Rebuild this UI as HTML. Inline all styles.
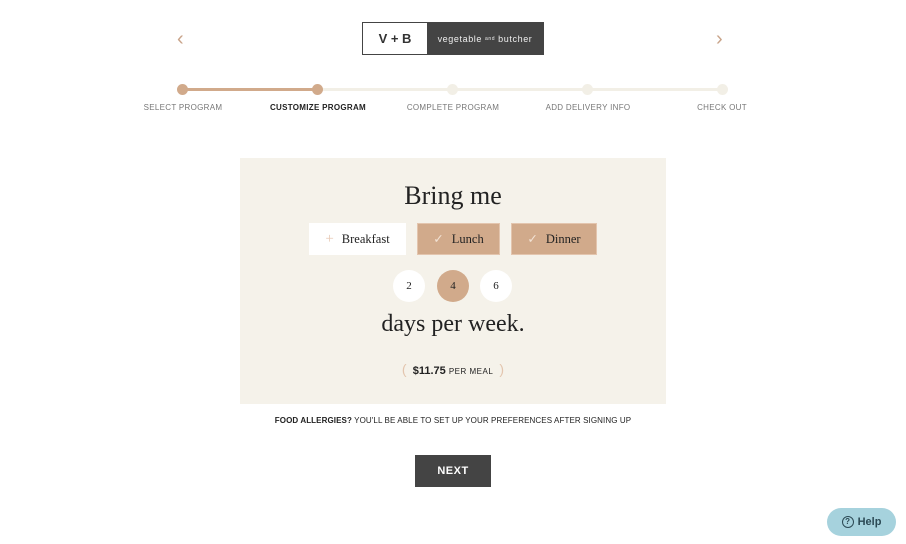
<!DOCTYPE html>
<html><head><style>
*{margin:0;padding:0;box-sizing:border-box}
body{width:906px;height:544px;background:#fff;position:relative;font-family:"Liberation Sans",sans-serif;overflow:hidden}
.a{position:absolute}
.serif{font-family:"Liberation Serif",serif;color:#222}
.step{font-size:8px;letter-spacing:.3px;color:#777;top:103px;text-align:center;width:140px}
.dot{width:11px;height:11px;border-radius:50%;top:84px;background:#f2efe6}
.btn{top:223px;height:32px;font-size:12.5px;display:flex;align-items:center;justify-content:center}
.c{width:32px;height:32px;border-radius:50%;top:270px;background:#fff;font-size:11px;display:flex;align-items:center;justify-content:center}
</style></head><body>
<div class="a" style="left:177px;top:28px;color:#c9a48a;font-size:20px;font-weight:300">&#8249;</div>
<div class="a" style="left:716px;top:28px;color:#c9a48a;font-size:20px;font-weight:300">&#8250;</div>
<div class="a" style="left:362px;top:22px;width:182px;height:33px;border:1px solid #444;display:flex">
<div style="width:64px;background:#fff;display:flex;align-items:center;justify-content:center;font-size:13px;font-weight:bold;color:#333">V + B</div>
<div style="flex:1;background:#444;color:#eee;font-size:9px;letter-spacing:.6px;display:flex;align-items:center;justify-content:center">vegetable <span style="font-size:5px;margin:0 3px">and</span> butcher</div>
</div>
<div class="a" style="left:183px;top:88px;width:540px;height:3px;background:#f2efe6"></div>
<div class="a" style="left:183px;top:88px;width:135px;height:3px;background:#d1aa8b"></div>
<div class="a dot" style="left:177px;background:#d1aa8b"></div>
<div class="a dot" style="left:312px;background:#d1aa8b"></div>
<div class="a dot" style="left:447px"></div>
<div class="a dot" style="left:582px"></div>
<div class="a dot" style="left:717px"></div>
<div class="a step" style="left:113px">SELECT PROGRAM</div>
<div class="a step" style="left:248px;color:#222;font-weight:bold">CUSTOMIZE PROGRAM</div>
<div class="a step" style="left:383px">COMPLETE PROGRAM</div>
<div class="a step" style="left:518px">ADD DELIVERY INFO</div>
<div class="a step" style="left:652px">CHECK OUT</div>
<div class="a" style="left:240px;top:158px;width:426px;height:246px;background:#f5f2ea"></div>
<div class="a serif" style="left:240px;top:181px;width:426px;text-align:center;font-size:26px">Bring me</div>
<div class="a btn serif" style="left:309px;width:97px;background:#fff"><span style="color:#e8c9b5;margin-right:8px;font-size:15px">+</span>Breakfast</div>
<div class="a btn serif" style="left:417px;width:83px;background:#d1aa8b;border:1px solid #e3c5ae"><span style="color:#f2e2d4;margin-right:8px">✓</span>Lunch</div>
<div class="a btn serif" style="left:511px;width:86px;background:#d1aa8b;border:1px solid #e3c5ae"><span style="color:#f2e2d4;margin-right:8px">✓</span>Dinner</div>
<div class="a c serif" style="left:393px">2</div>
<div class="a c serif" style="left:437px;background:#d1aa8b">4</div>
<div class="a c serif" style="left:480px">6</div>
<div class="a serif" style="left:240px;top:311px;width:426px;text-align:center;font-size:24px">days per week.</div>
<div class="a" style="left:240px;top:361px;width:426px;text-align:center;font-size:11px;color:#222"><span style="color:#e3c5ae;font-size:14px">(</span>&nbsp; <b>$11.75</b> <span style="font-size:8px;letter-spacing:.5px">PER MEAL</span> &nbsp;<span style="color:#e3c5ae;font-size:14px">)</span></div>
<div class="a" style="left:0;top:416px;width:906px;text-align:center;font-size:8px;letter-spacing:.1px;color:#222"><b>FOOD ALLERGIES?</b> YOU'LL BE ABLE TO SET UP YOUR PREFERENCES AFTER SIGNING UP</div>
<div class="a" style="left:415px;top:455px;width:76px;height:32px;background:#444;color:#fff;font-size:11px;letter-spacing:.5px;display:flex;align-items:center;justify-content:center;font-weight:bold">NEXT</div>
<div class="a" style="left:827px;top:508px;width:69px;height:28px;border-radius:14px;background:#a6d2dd;color:#2c4a55;font-size:11px;font-weight:bold;display:flex;align-items:center;justify-content:center"><span style="display:inline-block;width:12px;height:12px;border:1.5px solid #2c4a55;border-radius:50%;font-size:8px;line-height:9px;text-align:center;margin-right:4px">?</span>Help</div>
</body></html>
